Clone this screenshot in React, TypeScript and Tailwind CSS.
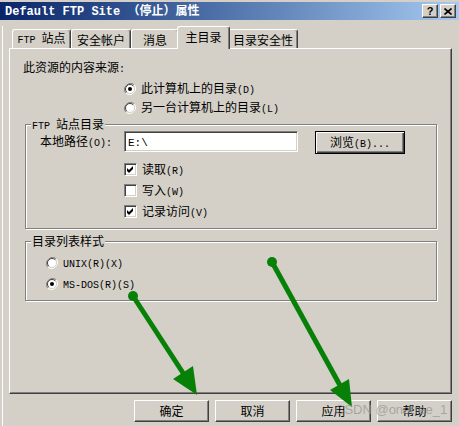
import { type ReactNode } from "react";

// split a label into ASCII runs (mono) and CJK runs, like SimSun does on the old dialogs
function T({ s, mono = "text-[10px]" }: { s: string; mono?: string }) {
  return (
    <span className="whitespace-pre">
      {s
        .split(/([\x20-\x7e]+)/)
        .filter(Boolean)
        .map((p, i) =>
          /^[\x20-\x7e]+$/.test(p) ? (
            <span key={i} className={`font-['Liberation_Mono',monospace] ${mono}`}>
              {p}
            </span>
          ) : (
            <span key={i}>{p}</span>
          ),
        )}
    </span>
  );
}

function Btn({ children, className = "" }: { children: ReactNode; className?: string }) {
  return (
    <div
      className={`flex items-center justify-center border border-t-white border-l-white border-r-[#404040] border-b-[#404040] bg-[#d4d0c8] shadow-[inset_-1px_-1px_0_#808080] ${className}`}
    >
      {children}
    </div>
  );
}

function Radio({ checked = false }: { checked?: boolean }) {
  return (
    <svg width="12" height="12" viewBox="0 0 12 12" className="shrink-0">
      <path d="M10.2 1.8 A6 6 0 0 0 1.8 10.2" fill="none" stroke="#808080" strokeWidth="1" />
      <path d="M1.8 10.2 A6 6 0 0 0 10.2 1.8" fill="none" stroke="#ffffff" strokeWidth="1" />
      <circle cx="6" cy="6" r="4.5" fill="#fff" />
      <path d="M9.2 2.8 A4.5 4.5 0 0 0 2.8 9.2" fill="none" stroke="#404040" strokeWidth="1" />
      <path d="M2.8 9.2 A4.5 4.5 0 0 0 9.2 2.8" fill="none" stroke="#d4d0c8" strokeWidth="1" />
      {checked && <circle cx="6" cy="6" r="2" fill="#000" />}
    </svg>
  );
}

function Check({ checked = false }: { checked?: boolean }) {
  return (
    <div className="flex h-[13px] w-[13px] shrink-0 items-center justify-center border border-t-[#808080] border-l-[#808080] border-r-white border-b-white bg-white shadow-[inset_1px_1px_0_#404040,inset_-1px_-1px_0_#d4d0c8]">
      {checked && (
        <svg width="7" height="7" viewBox="0 0 7 7">
          <polygon points="0,2 2,4 6,0 6,3 2,7 0,5" fill="#000" />
        </svg>
      )}
    </div>
  );
}

function Group({ label, className = "", children }: { label: string; className?: string; children: ReactNode }) {
  return (
    <div className={`relative border border-[#808080] shadow-[inset_1px_1px_0_#fff,1px_1px_0_#fff] ${className}`}>
      <div className="absolute left-[5px] top-[-8px] bg-[#d4d0c8] px-[1px] leading-[14px]">
        <T s={label} />
      </div>
      {children}
    </div>
  );
}

const tabs = [
  { label: "FTP 站点", w: "w-[59px]" },
  { label: "安全帐户", w: "w-[60px]" },
  { label: "消息", w: "w-[48px]" },
  { label: "主目录", w: "w-[53px]", active: true },
  { label: "目录安全性", w: "w-[70px]" },
];

export default function App() {
  return (
    <div className="relative h-[426px] w-[459px] overflow-hidden bg-[#d4d0c8] font-['Noto_Sans_CJK_SC','Liberation_Sans',sans-serif] text-[12px] text-black">
      {/* title bar */}
      <div className="mt-[2px] flex h-[18px] items-center bg-linear-to-r from-[#0a246a] to-[#a6caf0] pl-[5px] pr-[3px]">
        <div className="flex-1 font-bold leading-none text-white">
          <T s="Default FTP Site （停止）属性" mono="text-[12px]" />
        </div>
        <div className="flex gap-[2px]">
          <Btn className="h-[14px] w-[16px]">
            <span className="font-['Liberation_Sans',sans-serif] text-[11px] font-bold leading-none">?</span>
          </Btn>
          <Btn className="h-[14px] w-[16px]">
            <svg width="8" height="7" viewBox="0 0 8 7">
              <path d="M0.5 0.5 L7.5 6.5 M7.5 0.5 L0.5 6.5" stroke="#000" strokeWidth="1.6" />
            </svg>
          </Btn>
        </div>
      </div>

      <div className="ml-[2px] h-[406px] border-l border-white">
        {/* tabs */}
        <div className="ml-[9px] mt-[6px] flex h-[22px] items-end">
          {tabs.map((t) =>
            t.active ? (
              <div
                key={t.label}
                className={`relative z-10 -mx-[2px] -mb-[1px] flex h-[23px] items-start justify-center rounded-t-[3px] border-l border-t border-r border-white border-r-[#404040] bg-[#d4d0c8] pt-[3px] leading-[14px] shadow-[inset_-1px_0_0_#808080] ${t.w}`}
              >
                <T s={t.label} />
              </div>
            ) : (
              <div
                key={t.label}
                className={`flex h-[19px] items-center justify-center rounded-t-[3px] border-l border-t border-r border-white border-r-[#404040] pt-[1px] leading-[14px] shadow-[inset_-1px_0_0_#808080] ${t.w}`}
              >
                <T s={t.label} />
              </div>
            ),
          )}
        </div>

        {/* tab panel */}
        <div className="ml-[6px] flex h-[346px] w-[443px] flex-col border border-t-white border-l-white border-r-[#404040] border-b-[#404040] shadow-[inset_-1px_-1px_0_#808080]">
          <div className="mt-[9px] flex h-[19px] items-center pl-[13px]">
            <T s="此资源的内容来源:" />
          </div>
          <div className="mt-[2px] flex h-[19px] items-center gap-[5px] pl-[114px]">
            <Radio checked />
            <T s="此计算机上的目录(D)" />
          </div>
          <div className="flex h-[19px] items-center gap-[5px] pl-[114px]">
            <Radio />
            <T s="另一台计算机上的目录(L)" />
          </div>

          <Group label="FTP 站点目录" className="ml-[15px] mt-[7px] h-[105px] w-[412px]">
            <div className="mt-[6px] flex items-start">
              <div className="flex h-[21px] w-[98px] items-center pl-[14px]">
                <T s="本地路径(O):" />
              </div>
              <div className="flex h-[21px] w-[174px] items-center border border-t-[#808080] border-l-[#808080] border-r-white border-b-white bg-white pl-[3px] shadow-[inset_1px_1px_0_#404040,inset_-1px_-1px_0_#d4d0c8]">
                <T s="E:\" mono="text-[11px]" />
              </div>
              <div className="ml-[17px] flex h-[23px] w-[90px] items-center justify-center border border-black shadow-[inset_1px_1px_0_#fff,inset_-1px_-1px_0_#404040,inset_-2px_-2px_0_#808080]">
                <T s="浏览(B)..." />
              </div>
            </div>
            <div className="mt-[5px] flex flex-col pl-[98px]">
              <div className="flex h-[21px] items-center gap-[5px]">
                <Check checked />
                <T s="读取(R)" />
              </div>
              <div className="flex h-[21px] items-center gap-[5px]">
                <Check />
                <T s="写入(W)" />
              </div>
              <div className="flex h-[21px] items-center gap-[5px]">
                <Check checked />
                <T s="记录访问(V)" />
              </div>
            </div>
          </Group>

          <Group label="目录列表样式" className="ml-[15px] mt-[12px] h-[60px] w-[412px]">
            <div className="mt-[10px] flex flex-col pl-[20px]">
              <div className="flex h-[21px] items-center gap-[5px]">
                <Radio />
                <T s="UNIX(R)(X)" />
              </div>
              <div className="flex h-[21px] items-center gap-[5px]">
                <Radio checked />
                <T s="MS-DOS(R)(S)" />
              </div>
            </div>
          </Group>
        </div>

        {/* dialog buttons */}
        <div className="mt-[6px] flex w-[449px] justify-end gap-[6px]">
          <Btn className="h-[22px] w-[75px]">确定</Btn>
          <Btn className="h-[22px] w-[75px]">取消</Btn>
          <Btn className="h-[22px] w-[75px]">应用</Btn>
          <Btn className="h-[22px] w-[75px]">帮助</Btn>
        </div>
      </div>

      {/* annotation arrows drawn over the screenshot */}
      <svg className="pointer-events-none absolute left-0 top-0" width="459" height="426" viewBox="0 0 459 426">
        <g fill="#078007" stroke="#078007">
          <circle cx="133" cy="296" r="5" stroke="none" />
          <line x1="133" y1="296" x2="185" y2="376" strokeWidth="5" />
          <polygon points="197,395 173,379 193,366" stroke="none" />
          <circle cx="272" cy="262" r="5" stroke="none" />
          <line x1="272" y1="262" x2="342" y2="389" strokeWidth="5" />
          <polygon points="352,407 330,390 349,379" stroke="none" />
        </g>
      </svg>
      <div className="pointer-events-none absolute left-[335px] top-[402px] font-['Liberation_Sans',sans-serif] text-[13px] leading-[16px] text-[rgba(150,150,150,0.75)]">
        CSDN @onetree_1
      </div>
    </div>
  );
}
